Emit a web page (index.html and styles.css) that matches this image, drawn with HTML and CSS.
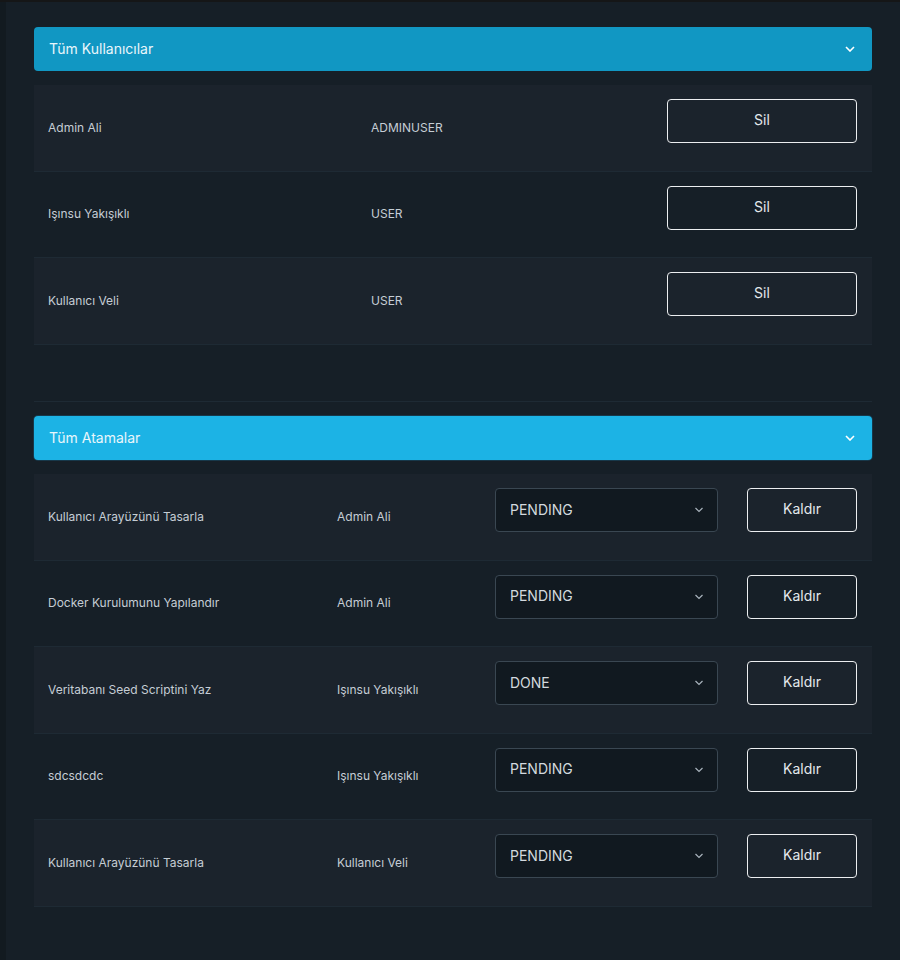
FILE: index.html
```html
<!DOCTYPE html>
<html lang="tr">
<head>
<meta charset="utf-8">
<title>Yönetim</title>
<link rel="stylesheet" href="styles.css">
</head>
<body>
<div class="topbar"></div>
<div class="frame">
  <main class="main">
    <section class="panel">
      <div class="panel-head dark">
        <span>Tüm Kullanıcılar</span>
        <svg class="chev" width="10" height="6" viewBox="0 0 10 6"><path d="M1 1l4 4 4-4" fill="none" stroke="#fff" stroke-width="1.6"/></svg>
      </div>
      <div class="rows">
        <div class="row users">
          <div class="cell">Admin Ali</div>
          <div class="cell">ADMINUSER</div>
          <button class="btn">Sil</button>
        </div>
        <div class="row users">
          <div class="cell">Işınsu Yakışıklı</div>
          <div class="cell">USER</div>
          <button class="btn">Sil</button>
        </div>
        <div class="row users">
          <div class="cell">Kullanıcı Veli</div>
          <div class="cell">USER</div>
          <button class="btn">Sil</button>
        </div>
      </div>
      <div class="spacer"></div>
    </section>

    <section class="panel">
      <div class="panel-head light">
        <span>Tüm Atamalar</span>
        <svg class="chev" width="10" height="6" viewBox="0 0 10 6"><path d="M1 1l4 4 4-4" fill="none" stroke="#fff" stroke-width="1.6"/></svg>
      </div>
      <div class="rows">
        <div class="row tasks">
          <div class="cell">Kullanıcı Arayüzünü Tasarla</div>
          <div class="cell">Admin Ali</div>
          <div class="select"><span>PENDING</span><svg width="10" height="6" viewBox="0 0 10 6"><path d="M1.5 1l3.5 3.5 3.5-3.5" fill="none" stroke="#a9b3bc" stroke-width="1.2"/></svg></div>
          <button class="btn">Kaldır</button>
        </div>
        <div class="row tasks">
          <div class="cell">Docker Kurulumunu Yapılandır</div>
          <div class="cell">Admin Ali</div>
          <div class="select"><span>PENDING</span><svg width="10" height="6" viewBox="0 0 10 6"><path d="M1.5 1l3.5 3.5 3.5-3.5" fill="none" stroke="#a9b3bc" stroke-width="1.2"/></svg></div>
          <button class="btn">Kaldır</button>
        </div>
        <div class="row tasks">
          <div class="cell">Veritabanı Seed Scriptini Yaz</div>
          <div class="cell">Işınsu Yakışıklı</div>
          <div class="select"><span>DONE</span><svg width="10" height="6" viewBox="0 0 10 6"><path d="M1.5 1l3.5 3.5 3.5-3.5" fill="none" stroke="#a9b3bc" stroke-width="1.2"/></svg></div>
          <button class="btn">Kaldır</button>
        </div>
        <div class="row tasks">
          <div class="cell">sdcsdcdc</div>
          <div class="cell">Işınsu Yakışıklı</div>
          <div class="select"><span>PENDING</span><svg width="10" height="6" viewBox="0 0 10 6"><path d="M1.5 1l3.5 3.5 3.5-3.5" fill="none" stroke="#a9b3bc" stroke-width="1.2"/></svg></div>
          <button class="btn">Kaldır</button>
        </div>
        <div class="row tasks">
          <div class="cell">Kullanıcı Arayüzünü Tasarla</div>
          <div class="cell">Kullanıcı Veli</div>
          <div class="select"><span>PENDING</span><svg width="10" height="6" viewBox="0 0 10 6"><path d="M1.5 1l3.5 3.5 3.5-3.5" fill="none" stroke="#a9b3bc" stroke-width="1.2"/></svg></div>
          <button class="btn">Kaldır</button>
        </div>
      </div>
    </section>
  </main>
</div>
</body>
</html>
```

FILE: styles.css
```css
* { box-sizing: border-box; }
html, body { margin: 0; padding: 0; }
body {
  background: #121a20;
  font-family: Inter, "Noto Sans", sans-serif;
  height: 960px;
  overflow: hidden;
}
.topbar { height: 2px; background: #151617; }
.frame {
  margin-left: 6px;
  background: #161f27;
  height: 958px;
}
.main {
  padding: 25px 28px 0 28px;
}
.panel-head {
  height: 44px;
  border-radius: 4px;
  display: flex;
  align-items: center;
  justify-content: space-between;
  padding: 0 17px 0 15px;
  color: #e9f6fb;
  font-size: 14px;
}
.panel-head span { margin-top: -2px; }
.panel-head.dark { background: #1197c3; }
.panel-head.light {
  background: #1cb3e5;
  box-shadow: 0 0 0 1px #17384a;
}
.chev { display: block; }
.rows { margin-top: 14px; }
.row {
  display: grid;
  align-items: start;
  padding: 14px 15px 13.5px 14px;
  border-bottom: 1px solid #1e2a34;
  font-size: 12px;
  color: #c5cdd5;
}
.row:nth-child(odd) { background: #1b232c; }
.row.users { grid-template-columns: 323px 296px 190px; }
.row.tasks { grid-template-columns: 289px 158px 223px 139px; }
.cell {
  height: 44px;
  margin-top: 6px;
  display: flex;
  align-items: center;
}
.btn {
  height: 44px;
  margin-bottom: 14px;
  padding: 0 0 3px 0;
  border: 1px solid #eceef0;
  border-radius: 4px;
  background: transparent;
  color: #e4e9ed;
  font-family: inherit;
  font-size: 14px;
  width: 100%;
}
.row.tasks .btn { width: 110px; margin-left: 29px; }
.select {
  height: 44px;
  border: 1px solid #3a4752;
  border-radius: 4px;
  background: #111920;
  color: #d3d9de;
  font-size: 14px;
  display: flex;
  align-items: center;
  justify-content: space-between;
  padding: 0 13px 0 14px;
}
.select span { margin-top: -2px; }
.spacer {
  height: 57.5px;
  border-bottom: 1px solid #1e2a34;
  margin-bottom: 14px;
}
```
